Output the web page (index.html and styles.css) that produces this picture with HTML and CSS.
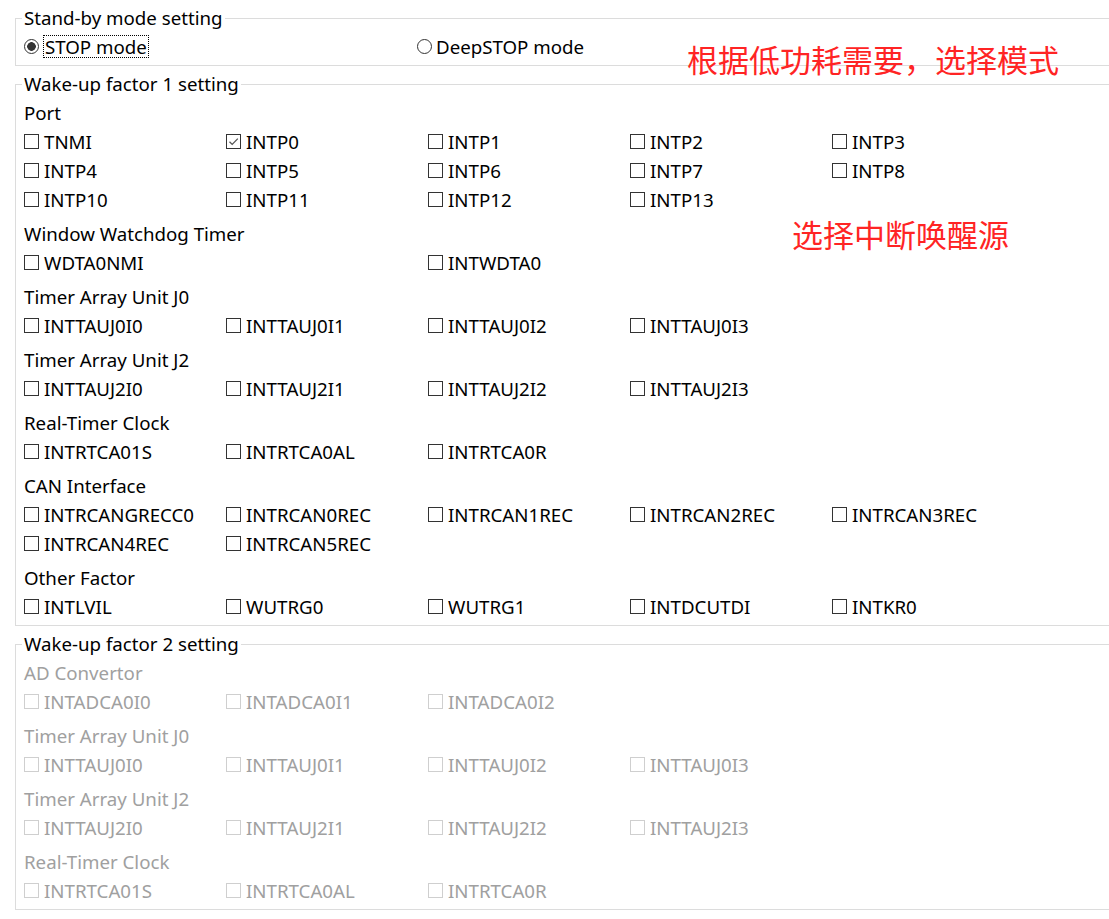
FILE: index.html
```html
<!DOCTYPE html>
<html lang="zh-CN">
<head>
    <meta charset="UTF-8">
    <title>Stand-by setting</title>
    <link rel="stylesheet" href="styles.css">
</head>
<body>
    <div class="page">
        <!-- Stand-by mode -->
        <fieldset class="panel">
            <legend>Stand-by mode setting</legend>
            <div class="modes">
                <label class="opt"><input type="radio" name="mode" checked><span class="focus">STOP mode</span></label>
                <label class="opt"><input type="radio" name="mode">DeepSTOP mode</label>
            </div>
        </fieldset>

        <!-- Wake-up factor 1 -->
        <fieldset class="panel">
            <legend>Wake-up factor 1 setting</legend>
            <div class="section">Port</div>
            <div class="grid">
                <label class="opt"><input type="checkbox">TNMI</label>
                <label class="opt"><input type="checkbox" checked>INTP0</label>
                <label class="opt"><input type="checkbox">INTP1</label>
                <label class="opt"><input type="checkbox">INTP2</label>
                <label class="opt"><input type="checkbox">INTP3</label>
                <label class="opt"><input type="checkbox">INTP4</label>
                <label class="opt"><input type="checkbox">INTP5</label>
                <label class="opt"><input type="checkbox">INTP6</label>
                <label class="opt"><input type="checkbox">INTP7</label>
                <label class="opt"><input type="checkbox">INTP8</label>
                <label class="opt"><input type="checkbox">INTP10</label>
                <label class="opt"><input type="checkbox">INTP11</label>
                <label class="opt"><input type="checkbox">INTP12</label>
                <label class="opt"><input type="checkbox">INTP13</label>
            </div>

            <div class="section">Window Watchdog Timer</div>
            <div class="grid">
                <label class="opt wide"><input type="checkbox">WDTA0NMI</label>
                <label class="opt"><input type="checkbox">INTWDTA0</label>
            </div>

            <div class="section">Timer Array Unit J0</div>
            <div class="grid">
                <label class="opt"><input type="checkbox">INTTAUJ0I0</label>
                <label class="opt"><input type="checkbox">INTTAUJ0I1</label>
                <label class="opt"><input type="checkbox">INTTAUJ0I2</label>
                <label class="opt"><input type="checkbox">INTTAUJ0I3</label>
            </div>

            <div class="section">Timer Array Unit J2</div>
            <div class="grid">
                <label class="opt"><input type="checkbox">INTTAUJ2I0</label>
                <label class="opt"><input type="checkbox">INTTAUJ2I1</label>
                <label class="opt"><input type="checkbox">INTTAUJ2I2</label>
                <label class="opt"><input type="checkbox">INTTAUJ2I3</label>
            </div>

            <div class="section">Real-Timer Clock</div>
            <div class="grid">
                <label class="opt"><input type="checkbox">INTRTCA01S</label>
                <label class="opt"><input type="checkbox">INTRTCA0AL</label>
                <label class="opt"><input type="checkbox">INTRTCA0R</label>
            </div>

            <div class="section">CAN Interface</div>
            <div class="grid">
                <label class="opt"><input type="checkbox">INTRCANGRECC0</label>
                <label class="opt"><input type="checkbox">INTRCAN0REC</label>
                <label class="opt"><input type="checkbox">INTRCAN1REC</label>
                <label class="opt"><input type="checkbox">INTRCAN2REC</label>
                <label class="opt"><input type="checkbox">INTRCAN3REC</label>
                <label class="opt"><input type="checkbox">INTRCAN4REC</label>
                <label class="opt"><input type="checkbox">INTRCAN5REC</label>
            </div>

            <div class="section">Other Factor</div>
            <div class="grid">
                <label class="opt"><input type="checkbox">INTLVIL</label>
                <label class="opt"><input type="checkbox">WUTRG0</label>
                <label class="opt"><input type="checkbox">WUTRG1</label>
                <label class="opt"><input type="checkbox">INTDCUTDI</label>
                <label class="opt"><input type="checkbox">INTKR0</label>
            </div>
        </fieldset>

        <!-- Wake-up factor 2 (disabled) -->
        <fieldset class="panel" disabled>
            <legend>Wake-up factor 2 setting</legend>
            <div class="section">AD Convertor</div>
            <div class="grid">
                <label class="opt"><input type="checkbox">INTADCA0I0</label>
                <label class="opt"><input type="checkbox">INTADCA0I1</label>
                <label class="opt"><input type="checkbox">INTADCA0I2</label>
            </div>

            <div class="section">Timer Array Unit J0</div>
            <div class="grid">
                <label class="opt"><input type="checkbox">INTTAUJ0I0</label>
                <label class="opt"><input type="checkbox">INTTAUJ0I1</label>
                <label class="opt"><input type="checkbox">INTTAUJ0I2</label>
                <label class="opt"><input type="checkbox">INTTAUJ0I3</label>
            </div>

            <div class="section">Timer Array Unit J2</div>
            <div class="grid">
                <label class="opt"><input type="checkbox">INTTAUJ2I0</label>
                <label class="opt"><input type="checkbox">INTTAUJ2I1</label>
                <label class="opt"><input type="checkbox">INTTAUJ2I2</label>
                <label class="opt"><input type="checkbox">INTTAUJ2I3</label>
            </div>

            <div class="section">Real-Timer Clock</div>
            <div class="grid">
                <label class="opt"><input type="checkbox">INTRTCA01S</label>
                <label class="opt"><input type="checkbox">INTRTCA0AL</label>
                <label class="opt"><input type="checkbox">INTRTCA0R</label>
            </div>
        </fieldset>

        <!-- 注释 -->
        <div class="note note-mode">根据低功耗需要，选择模式</div>
        <div class="note note-src">选择中断唤醒源</div>
    </div>
</body>
</html>
```

FILE: styles.css
```css
* {
    box-sizing: border-box;
}

html, body {
    margin: 0;
    padding: 0;
    background-color: #fff;
    overflow: hidden;
}

body {
    font-family: "Noto Sans", "Noto Sans CJK SC", sans-serif;
    font-size: 18.7px;
    color: #000;
}

.page {
    position: relative;
    padding: 4px 0 0 15px;
}

.panel {
    margin: 0 0 4px 0;
    padding: 0 0 3px 8px;
    border: 1px solid #dcdcdc;
    border-right: none;
    min-width: 0;
}

.panel legend {
    padding: 0 2px;
    margin-left: -2px;
    line-height: 28px;
    height: 29px;
}

.section {
    line-height: 28px;
    height: 29px;
    margin-top: 5px;
}

legend + .section {
    margin-top: 0;
}

.panel[disabled] .section,
.panel[disabled] .opt {
    color: #a0a0a0;
}

.modes {
    display: grid;
    grid-template-columns: 393px auto;
}

.grid {
    display: grid;
    grid-template-columns: repeat(5, 202px);
}

.grid .wide {
    grid-column: span 2;
}

.opt {
    display: flex;
    align-items: center;
    height: 29px;
    line-height: 26px;
    padding-bottom: 2px;
    white-space: nowrap;
}

.opt input {
    -webkit-appearance: none;
    appearance: none;
    margin: 0 5px 0 0;
    flex: none;
}

.opt input[type="checkbox"] {
    width: 15px;
    height: 15px;
    border: 1px solid #333;
    background-color: #fff;
}

.opt input[type="checkbox"]:checked {
    background: #fff url("data:image/svg+xml,%3Csvg xmlns='http://www.w3.org/2000/svg' width='13' height='13' viewBox='0 0 13 13'%3E%3Cpath d='M2.5 6.8 L5.2 9.4 L10.8 3.6' fill='none' stroke='%23555' stroke-width='1.3'/%3E%3C/svg%3E") center / 13px 13px no-repeat;
}

.panel[disabled] .opt input[type="checkbox"] {
    border-color: #cfcfcf;
}

.opt input[type="radio"] {
    width: 15px;
    height: 15px;
    border: 1px solid #333;
    border-radius: 50%;
    background-color: #fff;
    margin-right: 4px;
}

.opt input[type="radio"]:checked {
    background: radial-gradient(circle, #333 0 4px, #fff 4.6px);
}

.focus {
    border: 1px dotted #000;
    padding: 0 1px;
    line-height: 21px;
}

.note {
    position: absolute;
    color: #ff2424;
    font-family: "Noto Sans CJK SC", sans-serif;
    font-size: 31px;
    line-height: 40px;
    white-space: nowrap;
}

.note-mode {
    left: 687px;
    top: 39px;
}

.note-src {
    left: 792px;
    top: 214px;
}
```
